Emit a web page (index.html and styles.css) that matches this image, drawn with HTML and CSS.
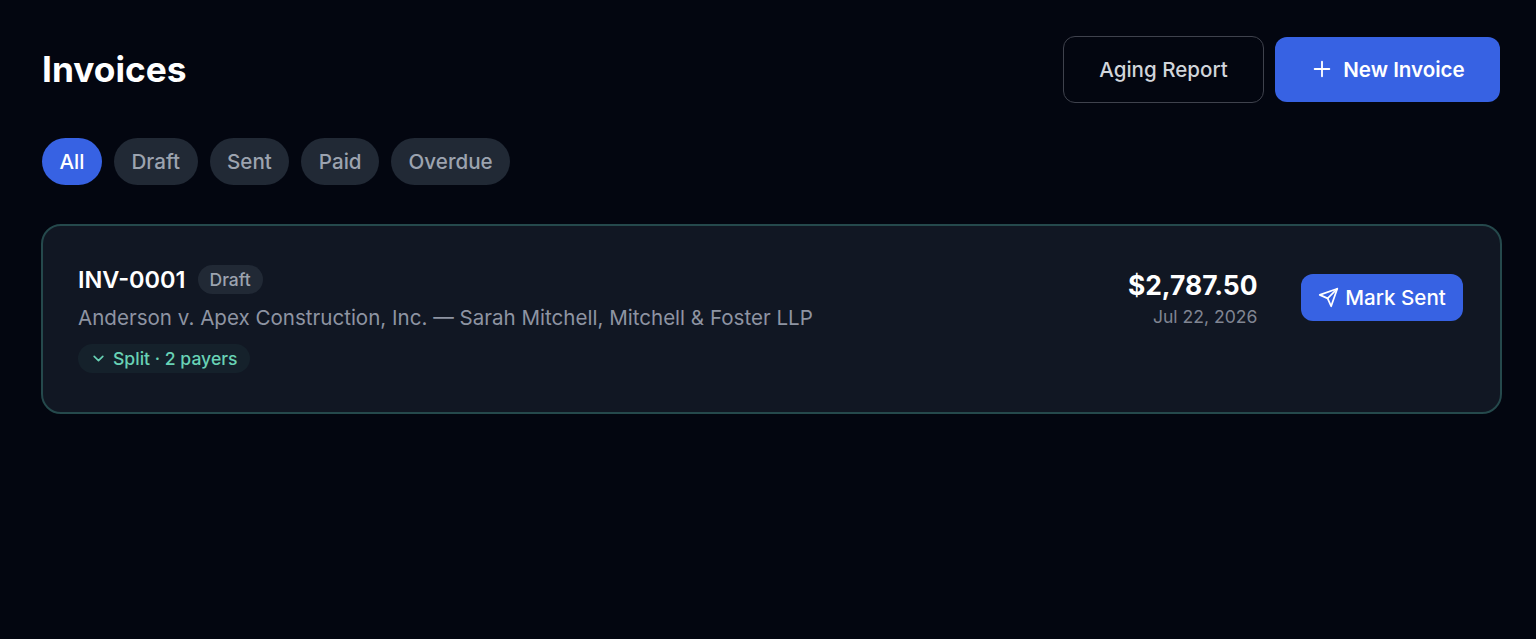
FILE: index.html
```
<!DOCTYPE html>
<html lang="en">
<head>
    <meta charset="UTF-8">
    <meta name="viewport" content="width=device-width, initial-scale=1.0">
    <title>Invoices</title>
    <link rel="stylesheet" href="styles.css">
</head>
<body>
    <header class="page-header">
        <h1>Invoices</h1>
        <div class="actions">
            <button class="btn btn-outline">Aging Report</button>
            <button class="btn btn-primary">
                <svg class="icon-plus" viewBox="0 0 24 24"><path d="M12 4v16m8-8H4"/></svg>
                <span>New Invoice</span>
            </button>
        </div>
    </header>

    <nav class="filters">
        <button class="filter active">All</button>
        <button class="filter">Draft</button>
        <button class="filter">Sent</button>
        <button class="filter">Paid</button>
        <button class="filter">Overdue</button>
    </nav>

    <main class="invoice">
        <div class="invoice-info">
            <div class="invoice-title">
                <span class="number">INV-0001</span>
                <span class="status">Draft</span>
            </div>
            <p class="matter">Anderson v. Apex Construction, Inc. — Sarah Mitchell, Mitchell &amp; Foster LLP</p>
            <button class="split">
                <svg class="icon-chevron" viewBox="0 0 24 24"><path d="m20 8-8 8-8-8"/></svg>
                <span>Split · 2 payers</span>
            </button>
        </div>
        <div class="invoice-total">
            <div class="amount">$2,787.50</div>
            <div class="date">Jul 22, 2026</div>
        </div>
        <button class="mark-sent">
            <svg class="icon-send" viewBox="0 0 24 24"><path d="m22 2-7 20-4-9-9-4Z"/><path d="M22 2 11 13"/></svg>
            <span>Mark Sent</span>
        </button>
    </main>
</body>
</html>
```

FILE: styles.css
```
* {
    box-sizing: border-box;
}
body {
    margin: 0;
    padding: 36px 34px 0 41px;
    background-color: #030610;
    color: white;
    font-family: Inter, sans-serif;
}
h1, p {
    margin: 0;
}
button {
    border: none;
    margin: 0;
    font-family: inherit;
    white-space: nowrap;
}
svg {
    fill: none;
    stroke: currentColor;
    stroke-linecap: round;
    stroke-linejoin: round;
    flex-shrink: 0;
}
.page-header {
    display: flex;
    justify-content: space-between;
    align-items: center;
    height: 67px;
    padding: 0 2px 0 1px;
}
h1 {
    font-size: 35.3px;
    font-weight: 700;
}
.actions {
    display: flex;
    align-items: center;
    gap: 11px;
}
.btn {
    display: flex;
    align-items: center;
    justify-content: center;
    border-radius: 12px;
    font-size: 20.55px;
    font-weight: 500;
}
.btn-outline {
    width: 201px;
    height: 67px;
    padding: 0 6px 1px;
    border: 1px solid #3f424d;
    background: none;
    color: #d1d5db;
}
.btn-primary {
    width: 225px;
    height: 65px;
    padding: 0 5px 1px 6px;
    gap: 10px;
    background-color: #3762e3;
    color: white;
    font-weight: 600;
}
.icon-plus {
    width: 22px;
    height: 22px;
    stroke-width: 2;
}
.filters {
    display: flex;
    gap: 12px;
    margin-top: 35px;
    padding-left: 1px;
}
.filter {
    height: 47px;
    padding: 0 17.5px;
    border-radius: 24px;
    background-color: #212935;
    color: #9ca3af;
    font-size: 20.6px;
    font-weight: 500;
}
.filter.active {
    background-color: #3762e3;
    color: white;
}
.invoice {
    display: flex;
    align-items: flex-start;
    height: 190px;
    margin-top: 39px;
    padding: 36px 37px 36px 35px;
    border: 2px solid #25494c;
    border-radius: 20px;
    background-color: #111723;
}
.invoice-info {
    flex: 1;
}
.invoice-title {
    display: flex;
    align-items: center;
    gap: 12px;
    height: 34px;
}
.number {
    font-size: 23.5px;
    font-weight: 600;
}
.status {
    height: 29px;
    padding: 0 12px;
    border-radius: 15px;
    background-color: #212935;
    color: #9ca3af;
    font-size: 17.5px;
    font-weight: 500;
    line-height: 29px;
}
.matter {
    margin-top: 7px;
    color: #8e94a2;
    font-size: 20.57px;
    line-height: 29px;
}
.split {
    display: flex;
    align-items: center;
    gap: 8px;
    height: 29px;
    margin-top: 12px;
    padding: 0 12px 0 14px;
    border-radius: 15px;
    background-color: #15212b;
    color: #68d2b5;
    font-size: 17.6px;
    font-weight: 500;
}
.icon-chevron {
    width: 13px;
    height: 13px;
    stroke-width: 3;
}
.invoice-total {
    margin: 5px 43.5px 0 0;
    text-align: right;
}
.amount {
    font-size: 26.4px;
    font-weight: 700;
    line-height: 37px;
}
.date {
    color: #808592;
    font-size: 17.6px;
    line-height: 25px;
}
.mark-sent {
    display: flex;
    align-items: center;
    justify-content: center;
    gap: 6px;
    width: 162px;
    height: 47px;
    margin-top: 12px;
    padding: 0;
    border-radius: 12px;
    background-color: #3762e3;
    color: white;
    font-size: 20.6px;
    font-weight: 500;
}
.icon-send {
    width: 21px;
    height: 21px;
    stroke-width: 2;
}
```
